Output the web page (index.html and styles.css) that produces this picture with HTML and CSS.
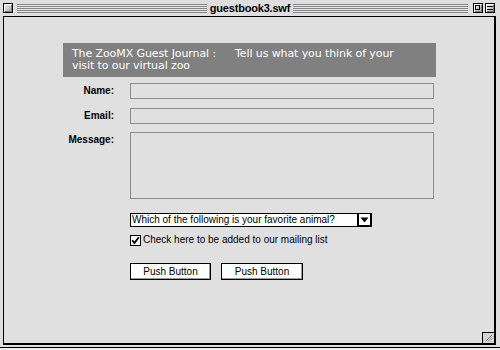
FILE: index.html
```html
<!DOCTYPE html>
<html>
<head>
<meta charset="utf-8">
<title>guestbook3.swf</title>
<link rel="stylesheet" href="styles.css">
</head>
<body>
<div class="window">
  <div class="titlebar">
    <span class="box close"></span>
    <span class="stripes left"></span>
    <span class="title">guestbook3.swf</span>
    <span class="stripes right"></span>
    <span class="box zoom"><span class="zoom-inner"></span></span>
    <span class="box collapse"><span class="collapse-inner"></span></span>
  </div>
  <div class="pane">
    <div class="banner">The ZooMX Guest Journal :<span class="gap"></span>Tell us what you think of your<br>visit to our virtual zoo</div>
    <div class="row first">
      <span class="lbl">Name:</span>
      <input class="field" type="text">
    </div>
    <div class="row">
      <span class="lbl">Email:</span>
      <input class="field" type="text">
    </div>
    <div class="row top">
      <span class="lbl msg">Message:</span>
      <textarea class="field area"></textarea>
    </div>
    <div class="select">
      <span class="select-text">Which of the following is your favorite animal?</span>
      <span class="select-btn"><svg width="9" height="6" viewBox="0 0 9 6"><polygon points="0.5,0.5 8.5,0.5 4.5,5.5" fill="#000"/></svg></span>
    </div>
    <div class="check">
      <svg class="checkbox" width="11" height="11" viewBox="0 0 11 11"><rect x="0.5" y="0.5" width="10" height="10" fill="#fff" stroke="#000"/><path d="M2.2 5.2 L4.4 8 L8.8 2.2" fill="none" stroke="#000" stroke-width="1.8"/></svg>
      <span>Check here to be added to our mailing list</span>
    </div>
    <div class="buttons">
      <button class="btn" type="button">Push Button</button>
      <button class="btn wide" type="button">Push Button</button>
    </div>
  </div>
  <div class="resize"><svg width="13" height="12" viewBox="0 0 13 12"><path d="M4 10.5 L11 3.5 M6.5 10.5 L11.5 5.5 M9 10.5 L11.5 8" stroke="#444" stroke-width="1" fill="none"/><path d="M5 10.5 L12 3.5 M7.5 10.5 L12 6 M10 10.5 L12 8.5" stroke="#fff" stroke-width="1" fill="none"/></svg></div>
</div>
</body>
</html>
```
FILE: styles.css
```css
* { box-sizing: border-box; }
html, body { margin: 0; padding: 0; }
body {
  width: 500px;
  height: 350px;
  overflow: hidden;
  background: #ececec;
  font-family: "Liberation Sans", Arial, sans-serif;
}
.window {
  position: relative;
  width: 500px;
  height: 348px;
  border-bottom: 1px solid #000;
  background: #dedede;
  display: flex;
  flex-direction: column;
}
.titlebar {
  flex: none;
  height: 16px;
  display: flex;
  align-items: flex-start;
  padding-top: 3px;
}
.box {
  position: relative;
  flex: none;
  width: 10px;
  height: 10px;
  border: 1px solid #000;
  background: linear-gradient(135deg, #f4f4f4, #a8a8a8);
  box-shadow: inset 1px 1px 0 #fff, inset -1px -1px 0 #777;
}
.close { margin-left: 3px; }
.stripes {
  flex: none;
  height: 9px;
  margin-top: 1px;
  background: repeating-linear-gradient(to bottom, #858585 0 1px, #e8e8e8 1px 2px);
}
.stripes.left { width: 190px; margin-left: 4px; }
.stripes.right { width: 175px; }
.title {
  flex: none;
  width: 86px;
  text-align: center;
  font-size: 11px;
  font-weight: bold;
  line-height: 10px;
  letter-spacing: -0.2px;
  color: #000;
}
.zoom { margin-left: 5px; }
.collapse { margin-left: 2px; }
.zoom-inner {
  position: absolute;
  left: 1px;
  top: 1px;
  width: 5px;
  height: 5px;
  border: 1px solid #000;
}
.collapse-inner {
  position: absolute;
  left: 1px;
  right: 1px;
  top: 2px;
  height: 4px;
  border-top: 1px solid #000;
  border-bottom: 1px solid #000;
}
.pane {
  flex: 1;
  margin: 0 4px 2px 3px;
  border: 1px solid #000;
  border-right-width: 2px;
  border-bottom-width: 2px;
  background: #e0e0e0;
  padding: 26px 0 0 59px;
}
.banner {
  width: 373px;
  height: 34px;
  padding: 5px 0 0 9px;
  background: #808080;
  color: #fff;
  font-family: "DejaVu Sans", Verdana, sans-serif;
  font-size: 11px;
  letter-spacing: -0.1px;
  line-height: 12px;
}
.gap { display: inline-block; width: 19px; }
.row {
  display: flex;
  align-items: center;
  gap: 16px;
  margin-top: 9px;
}
.row.first { margin-top: 6px; }
.row.top { align-items: flex-start; margin-top: 8px; }
.lbl {
  width: 51px;
  text-align: right;
  font-size: 10px;
  font-weight: bold;
  line-height: 12px;
  color: #000;
}
.lbl.msg { margin-top: 2px; }
.field {
  display: block;
  width: 304px;
  height: 16px;
  margin: 0;
  padding: 0;
  border: 1px solid #8c8c8c;
  background: #e0e0e0;
  outline: none;
  resize: none;
}
.field.area { height: 67px; }
.select {
  display: flex;
  width: 242px;
  height: 14px;
  margin: 14px 0 0 67px;
  border: 1px solid #000;
  background: #fff;
}
.select-text {
  flex: 1;
  padding-left: 1px;
  font-size: 10px;
  line-height: 12px;
  color: #000;
}
.select-btn {
  flex: none;
  width: 15px;
  height: 14px;
  margin: -1px -1px 0 0;
  border: 2px solid #000;
  border-top-width: 1px;
  display: flex;
  align-items: center;
  justify-content: center;
  background: #fff;
}
.check {
  display: flex;
  align-items: center;
  gap: 2px;
  margin: 7px 0 0 67px;
  font-size: 10px;
  line-height: 12px;
  color: #000;
}
.checkbox { display: block; flex: none; }
.buttons {
  display: flex;
  gap: 10px;
  margin: 17px 0 0 67px;
}
.btn {
  width: 81px;
  height: 17px;
  margin: 0;
  padding: 0;
  border: 1px solid #000;
  background: #fff;
  box-shadow: inset -1px -1px 0 #9a9a9a;
  font-family: "Liberation Sans", Arial, sans-serif;
  font-size: 10px;
  line-height: 14px;
  color: #000;
}
.btn.wide { width: 82px; }
.resize {
  position: absolute;
  left: 482px;
  top: 332px;
  width: 14px;
  height: 13px;
  border-top: 1px solid #000;
  border-left: 1px solid #000;
  border-right: 2px solid #000;
  border-bottom: 2px solid #000;
  background: #d4d4d4;
  display: flex;
  align-items: flex-end;
  justify-content: flex-end;
}
.resize svg { display: block; }
```
